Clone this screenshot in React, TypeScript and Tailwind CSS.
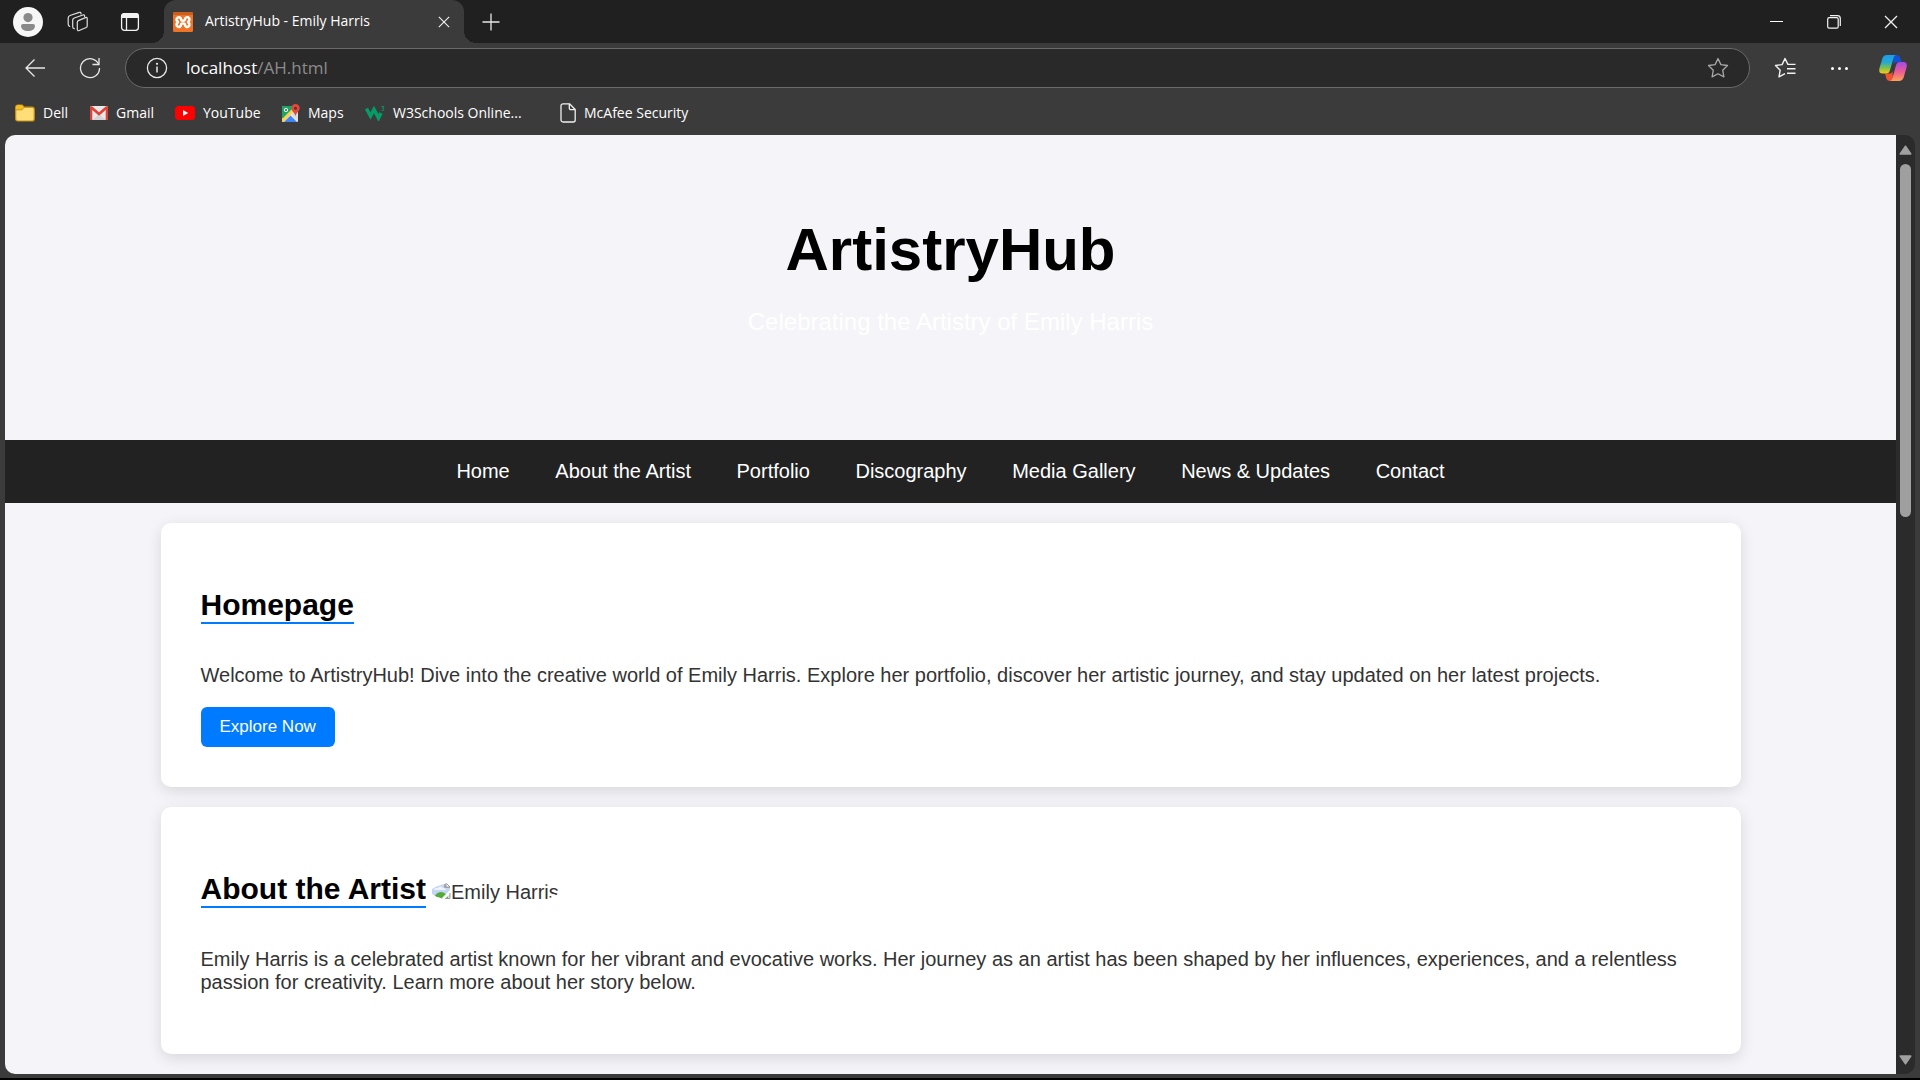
import React from "react";

function Profile() {
  return (
    <svg width="30" height="30" viewBox="0 0 30 30">
      <circle cx="15" cy="15" r="15" fill="#f7f7f7" />
      <circle cx="15" cy="10.6" r="4.6" fill="#8a8a8a" />
      <path d="M8 19a2 2 0 0 1 2-2h10a2 2 0 0 1 2 2c0 3-3 5-7 5s-7-2-7-5z" fill="#8a8a8a" />
    </svg>
  );
}

function Workspaces() {
  return (
    <svg width="22" height="22" viewBox="0 0 22 22" fill="none" stroke="#dedede" strokeWidth="1.2" strokeLinejoin="round" strokeLinecap="round">
      <path d="M11.3 9.6l7.2-3q1.7-.6 1.7 1v7.300q0 1.200-1 1.600l-7 3q-1.900.8-1.900-1.200v-7q0-1.200 1-1.700z" />
      <path d="M17.600 5.400V5q0-1.600-1.700-1L7.300 7q-1.600.7-1.600 2v6.700q0 1.600 1.600 1.900" />
      <path d="M14 3V2.300q-.3-1.400-1.800-.9L3 4.500Q1.200 5.200 1.200 7v6.300q0 1.600 1.500 2" />
    </svg>
  );
}

function TabActions() {
  return (
    <svg width="20" height="20" viewBox="0 0 20 20" fill="none" stroke="#f2f2f2" strokeWidth="1.300">
      <rect x="1.600" y="1.600" width="16.800" height="16.800" rx="2.800" />
      <path d="M1.600 5.400V4.400a2.800 2.800 0 0 1 2.800-2.800h11.200a2.800 2.800 0 0 1 2.800 2.800V5.400z" fill="#f2f2f2" />
      <path d="M6.500 6v12.400" />
    </svg>
  );
}

function Xampp() {
  return (
    <svg width="20" height="20" viewBox="0 0 20 20">
      <rect width="20" height="20" rx="1.500" fill="#ef7426" />
      <path d="M0 1.500A1.500 1.500 0 0 1 1.500 0h17A1.500 1.500 0 0 1 20 1.500V3H0z" fill="#c9601f" />
      <path d="M5.800 5.200a2.300 2.300 0 0 1 2.300 2.300c0 .8.500 1.200 1.900 1.200s1.900-.4 1.900-1.200a2.300 2.300 0 1 1 3.600 1.900c-.6.400-.6.900 0 1.300a2.300 2.300 0 1 1-3.600 1.900c0-.8-.5-1.200-1.900-1.200s-1.900.4-1.900 1.200a2.300 2.300 0 1 1-3.600-1.900c.6-.4.600-.9 0-1.300a2.300 2.300 0 0 1 1.300-4.200z" fill="none" stroke="#fff" strokeWidth="2.500" />
    </svg>
  );
}

function Close({ size }: { size: number }) {
  return (
    <svg width={size} height={size} viewBox="0 0 14 14" stroke="#f0f0f0" strokeWidth="1.300">
      <path d="M1 1l12 12M13 1L1 13" />
    </svg>
  );
}

function Plus() {
  return (
    <svg width="18" height="18" viewBox="0 0 18 18" stroke="#e6e6e6" strokeWidth="1.300">
      <path d="M9 .5v17M.5 9h17" />
    </svg>
  );
}

function Back() {
  return (
    <svg width="22" height="20" viewBox="0 0 22 20" fill="none" stroke="#e8e8e8" strokeWidth="1.300">
      <path d="M21 10H2M10.500 1.500L2 10l8.500 8.500" />
    </svg>
  );
}

function Reload() {
  return (
    <svg width="22" height="22" viewBox="0 0 22 22" fill="none" stroke="#e8e8e8" strokeWidth="1.300">
      <path d="M19.700 7.300A9.500 9.500 0 1 0 20.500 11" />
      <path d="M20 1v6.500h-6.500" />
    </svg>
  );
}

function Info() {
  return (
    <svg width="22" height="22" viewBox="0 0 22 22" fill="none" stroke="#e8e8e8" strokeWidth="1.300">
      <circle cx="11" cy="11" r="9.600" />
      <path d="M11 9.500v6" strokeWidth="1.500" />
      <circle cx="11" cy="6.800" r="1.100" fill="#e8e8e8" stroke="none" />
    </svg>
  );
}

function Star() {
  return (
    <svg width="22" height="22" viewBox="0 0 22 22" fill="none" stroke="#a8a8a8" strokeWidth="1.300" strokeLinejoin="round">
      <path d="M11 1.500l2.900 6.100 6.600.9-4.800 4.700 1.200 6.700L11 16.700l-5.900 3.200 1.200-6.700L1.500 8.500l6.600-.9z" />
    </svg>
  );
}

function Favorites() {
  return (
    <svg width="22" height="22" viewBox="0 0 22 22" fill="none" stroke="#f2f2f2" strokeWidth="1.400" strokeLinejoin="round">
      <path d="M21.500 7.400h-7.600L11 1.500 8.100 7.600l-6.600.9 4.700 4.700-1.200 6.700 6-3.200" />
      <path d="M13 11.800h8.500M13 16.200h8.500" />
    </svg>
  );
}

function Copilot() {
  return (
    <svg width="28" height="26" viewBox="0 0 28 26">
      <defs>
        <linearGradient id="cpLeft" x1="0" y1="0" x2="0" y2="1">
          <stop offset="0" stopColor="#1c9cf0" />
          <stop offset=".4" stopColor="#26a9cf" />
          <stop offset=".7" stopColor="#7fc04f" />
          <stop offset="1" stopColor="#fccb10" />
        </linearGradient>
        <linearGradient id="cpRight" x1="0" y1="0" x2="0" y2="1">
          <stop offset="0" stopColor="#a04bea" />
          <stop offset=".5" stopColor="#ec5a97" />
          <stop offset="1" stopColor="#fba255" />
        </linearGradient>
      </defs>
      <path d="M14 0h3.500c2 0 3 1 3.600 2.800L22.500 7H18c-2 0-3 1-3.500 2.600z" fill="#1450d2" />
      <path d="M6 18.500h4.500c1.500 0 2.500-1 3-2.600l.5 10.100h-3c-2.200 0-3.200-1-3.800-3z" fill="#ef5330" />
      <path d="M8 0h9.500c-1.700 0-2.400 1.200-3 3l-3.600 12.500c-.6 2-1.600 3-3.600 3H3.500C.5 18.500-.3 16.500.5 13L3.200 4C4 1.300 5.500 0 8 0z" fill="url(#cpLeft)" />
      <path d="M20 26h-9.500c1.700 0 2.400-1.200 3-3l3.600-13c.6-2 1.600-3 3.600-3h3.800c3 0 3.800 2 3 5.500L24.800 22C24 24.700 22.500 26 20 26z" fill="url(#cpRight)" />
    </svg>
  );
}

function Folder() {
  return (
    <svg width="20" height="18" viewBox="0 0 20 18">
      <path d="M.7 3a2 2 0 0 1 2-2h4.500l2 2.200h8a2 2 0 0 1 2 2V15a2 2 0 0 1-2 2H2.700a2 2 0 0 1-2-2z" fill="#ffdd78" stroke="#c89311" strokeWidth="1.200" />
      <path d="M1.200 3c0-1 .6-1.500 1.500-1.500H7l1.700 1.800L7 5.500H1.200z" fill="#f5bd1c" />
      <path d="M1 5.800h6l2-2.400" fill="none" stroke="#c89311" />
    </svg>
  );
}

function Gmail() {
  return (
    <svg width="18" height="14" viewBox="0 0 18 14">
      <rect width="18" height="14" rx="1.500" fill="#e9e9e9" />
      <path d="M2.500 14L9 8l6.500 6z" fill="#d4d4d4" />
      <path d="M0 14V1.500C0 .3 1.400-.3 2.300.5L9 6.300 15.700.5C16.600-.3 18 .3 18 1.500V14h-2.300V4L9 9.700 2.300 4v10z" fill="#dd4437" />
    </svg>
  );
}

function YouTube() {
  return (
    <svg width="20" height="14" viewBox="0 0 20 14">
      <rect width="20" height="14" rx="3.500" fill="#f00" />
      <path d="M8 4l5.200 3L8 10z" fill="#fff" />
    </svg>
  );
}

function Maps() {
  return (
    <svg width="18" height="18" viewBox="0 0 18 18">
      <rect y="2" width="16" height="16" rx="1" fill="#e8e8e8" />
      <path d="M0 3a1 1 0 0 1 1-1h10L0 15z" fill="#1fa463" />
      <path d="M0 15L10.500 4l2 2.500L1.500 18 0 17z" fill="#ffd04b" />
      <path d="M0 3a1 1 0 0 1 1-1h9v3L1 14H0z" fill="#1fa463" />
      <path d="M2 18l6.500-6.500L15 18z" fill="#4286f5" />
      <path d="M9.500 10.500L16 17V8l-3.500-1z" fill="#dcdcdc" />
      <circle cx="4" cy="6" r="1.700" fill="none" stroke="#fff" />
      <path d="M13.500 0A4.200 4.200 0 0 1 17.700 4.200c0 2.800-3.300 4-4.200 8-.9-4-4.200-5.200-4.200-8A4.200 4.200 0 0 1 13.500 0z" fill="#dd4b3e" />
      <circle cx="13.500" cy="4.200" r="1.500" fill="#7c2319" />
    </svg>
  );
}

function W3() {
  return (
    <svg width="20" height="16" viewBox="0 0 20 16" fill="none" stroke="#059c68">
      <path d="M1.500 3.500L5.500 11 9 4.500l4.500 8.500 2.500-5" strokeWidth="3.600" />
      <path d="M16.500 1.500h2.300l-1.300 1.700q1.700.2 1.300 1.600-.7 1.200-2.300.4" strokeWidth="1" />
    </svg>
  );
}

function Page() {
  return (
    <svg width="16" height="20" viewBox="0 0 16 20" fill="none" stroke="#f0f0f0" strokeWidth="1.300" strokeLinejoin="round">
      <path d="M3 .8h6.500L15.200 6.500V17a2 2 0 0 1-2 2H3a2 2 0 0 1-2-2V2.800a2 2 0 0 1 2-2z" />
      <path d="M9.300 1v4a1.700 1.700 0 0 0 1.700 1.700h4" />
    </svg>
  );
}

function BrokenImage() {
  return (
    <svg className="shrink-0" width="20" height="20" viewBox="0 0 20 20">
      <path d="M1 3h13l5 5v10H1z" fill="#c4d6f6" />
      <path d="M1 3h13M14 3v5h5" fill="none" stroke="#9a9a9a" strokeWidth="1.500" />
      <path d="M15 4l4 4h-4z" fill="#fff" stroke="#9a9a9a" />
      <path d="M3 11q1-3 4-2 2-3 5 0 3 0 3 2z" fill="#eef4ff" />
      <path d="M2 20q3-7 8-7t8 7z" fill="#55ab3a" />
      <path d="M10 20l9-9v4l-5 5z" fill="#fff" />
      <path d="M14 19.500h5V14" fill="none" stroke="#9a9a9a" />
    </svg>
  );
}

function TitleBar() {
  return (
    <header className="flex h-[43px] items-stretch bg-[#202020]">
      <div className="flex w-[164px] items-center gap-6 pl-[13px]">
        <button aria-label="Profile"><Profile /></button>
        <button aria-label="Workspaces"><Workspaces /></button>
        <button className="ml-[7px]" aria-label="Tab actions"><TabActions /></button>
      </div>
      <div className="relative flex w-[300px] items-center rounded-t-xl bg-[#3b3b3b] pl-[9px] pr-[14px]">
        <span className="absolute bottom-0 right-full size-3 bg-[radial-gradient(circle_at_top_left,#202020_12px,#3b3b3b_12px)]" />
        <span className="absolute bottom-0 left-full size-3 bg-[radial-gradient(circle_at_top_right,#202020_12px,#3b3b3b_12px)]" />
        <Xampp />
        <span className="ml-3 flex-1 whitespace-nowrap pb-[2px] text-sm text-white">ArtistryHub - Emily Harris</span>
        <button aria-label="Close tab"><Close size={12} /></button>
      </div>
      <button className="ml-[18px]" aria-label="New tab"><Plus /></button>
      <div className="ml-auto flex items-stretch">
        <button className="flex w-[57px] items-center justify-center" aria-label="Minimize">
          <span className="h-px w-[13px] bg-white" />
        </button>
        <button className="flex w-[57px] items-center justify-center" aria-label="Restore">
          <svg width="14" height="14" viewBox="0 0 14 14" fill="none" stroke="#f4f4f4" strokeWidth="1.200">
            <rect x=".7" y="2.700" width="10.500" height="10.500" rx="1.500" />
            <path d="M3 .7h7.500a2.800 2.800 0 0 1 2.800 2.800V11" />
          </svg>
        </button>
        <button className="flex w-[58px] items-center justify-center" aria-label="Close window"><Close size={14} /></button>
      </div>
    </header>
  );
}

function Toolbar() {
  return (
    <div className="flex h-[50px] items-center pl-6 pr-[13px]">
      <button aria-label="Back"><Back /></button>
      <button className="ml-[33px]" aria-label="Refresh"><Reload /></button>
      <label className="ml-6 flex h-10 flex-1 items-center rounded-full border border-[#6a6a6a] bg-[#292929] pl-5 pr-5 text-[17px]">
        <Info />
        <span className="ml-[18px] text-white">localhost</span>
        <input className="min-w-0 flex-1 bg-transparent text-[#8c8c8c] outline-none" aria-label="Address" defaultValue="/AH.html" />
        <Star />
      </label>
      <button className="ml-6" aria-label="Favorites"><Favorites /></button>
      <button className="ml-[35px] flex gap-1" aria-label="Settings and more">
        <span className="size-[3px] rounded-full bg-white" />
        <span className="size-[3px] rounded-full bg-white" />
        <span className="size-[3px] rounded-full bg-white" />
      </button>
      <button className="ml-[31px]" aria-label="Copilot"><Copilot /></button>
    </div>
  );
}

const bookmarks = [
  { label: "Dell", icon: <Folder />, box: "w-[75px]" },
  { label: "Gmail", icon: <Gmail />, box: "w-[85px]" },
  { label: "YouTube", icon: <YouTube />, box: "w-[107px]" },
  { label: "Maps", icon: <Maps />, box: "w-[83px]" },
  { label: "W3Schools Online...", icon: <W3 />, box: "w-[195px]" },
  { label: "McAfee Security", icon: <Page />, box: "w-[160px]" },
];

function Bookmarks() {
  return (
    <nav className="flex h-[42px] items-center pl-[15px] pb-[2px] text-sm text-white" aria-label="Bookmarks">
      {bookmarks.map((b) => (
        <a key={b.label} href="#" className={"flex items-center gap-2 whitespace-nowrap " + b.box}>
          {b.icon}
          {b.label}
        </a>
      ))}
    </nav>
  );
}

const links = ["Home", "About the Artist", "Portfolio", "Discography", "Media Gallery", "News & Updates", "Contact"];

function Card({ title, aside, children }: { title: string; aside?: React.ReactNode; children: React.ReactNode }) {
  return (
    <section className="mx-auto mt-5 w-full max-w-[1580px] rounded-[10px] bg-white p-10 shadow-[0_4px_15px_rgba(0,0,0,0.12)]">
      <div className="mt-[25px] mb-10 flex items-baseline gap-[5px]">
        <h2 className="border-b-2 border-[#007bff] text-[30px] font-bold leading-[34px] text-black">{title}</h2>
        {aside}
      </div>
      {children}
    </section>
  );
}

function Site() {
  return (
    <div className="min-w-0 flex-1 overflow-hidden rounded-l-[10px] bg-[#f4f4f9] font-['Liberation_Sans',Arial,sans-serif] text-xl leading-[23px] text-[#333]">
      <header className="py-20 text-center">
        <h1 className="mb-6 text-[60px] font-bold leading-[69px] text-black">ArtistryHub</h1>
        <p className="mb-6 text-2xl leading-7 text-white">Celebrating the Artistry of Emily Harris</p>
      </header>
      <nav className="bg-[#222] py-5 text-center text-white">
        {links.map((l) => (
          <React.Fragment key={l}>
            <a href="#" className="mx-5">{l}</a>{" "}
          </React.Fragment>
        ))}
      </nav>
      <main>
        <Card title="Homepage">
          <p>Welcome to ArtistryHub! Dive into the creative world of Emily Harris. Explore her portfolio, discover her artistic journey, and stay updated on her latest projects.</p>
          <button className="mt-5 block h-10 rounded-md bg-[#007bff] px-[19px] pb-[2px] text-[17px] text-white">Explore Now</button>
        </Card>
        <Card
          title="About the Artist"
          aside={
            <span className="flex items-baseline overflow-hidden rounded-[50%]">
              <BrokenImage />
              Emily Harris
            </span>
          }
        >
          <p className="mb-5">Emily Harris is a celebrated artist known for her vibrant and evocative works. Her journey as an artist has been shaped by her influences, experiences, and a relentless passion for creativity. Learn more about her story below.</p>
        </Card>
      </main>
    </div>
  );
}

function Scrollbar() {
  return (
    <div className="flex w-[19px] flex-col items-center rounded-r-[10px] bg-[#2b2b2b] pb-[9px] pt-[10px]">
      <svg width="13" height="10" viewBox="0 0 13 10"><path d="M6.500 1.200L11.800 9H1.200z" fill="#a0a0a0" stroke="#a0a0a0" strokeWidth="1.500" strokeLinejoin="round" /></svg>
      <div className="my-[9px] w-full flex-1">
        <div className="mx-auto h-[40%] w-[11px] rounded-full bg-[#9f9f9f]" />
      </div>
      <svg width="13" height="10" viewBox="0 0 13 10"><path d="M6.500 8.800L11.800 1H1.200z" fill="#a0a0a0" stroke="#a0a0a0" strokeWidth="1.500" strokeLinejoin="round" /></svg>
    </div>
  );
}

export default function App() {
  return (
    <div className="flex h-screen flex-col overflow-hidden border-b-2 border-black bg-[#3b3b3b] font-['Open_Sans','Noto_Sans',sans-serif]">
      <TitleBar />
      <Toolbar />
      <Bookmarks />
      <div className="mx-[5px] mb-1 flex min-h-0 flex-1">
        <Site />
        <Scrollbar />
      </div>
    </div>
  );
}
